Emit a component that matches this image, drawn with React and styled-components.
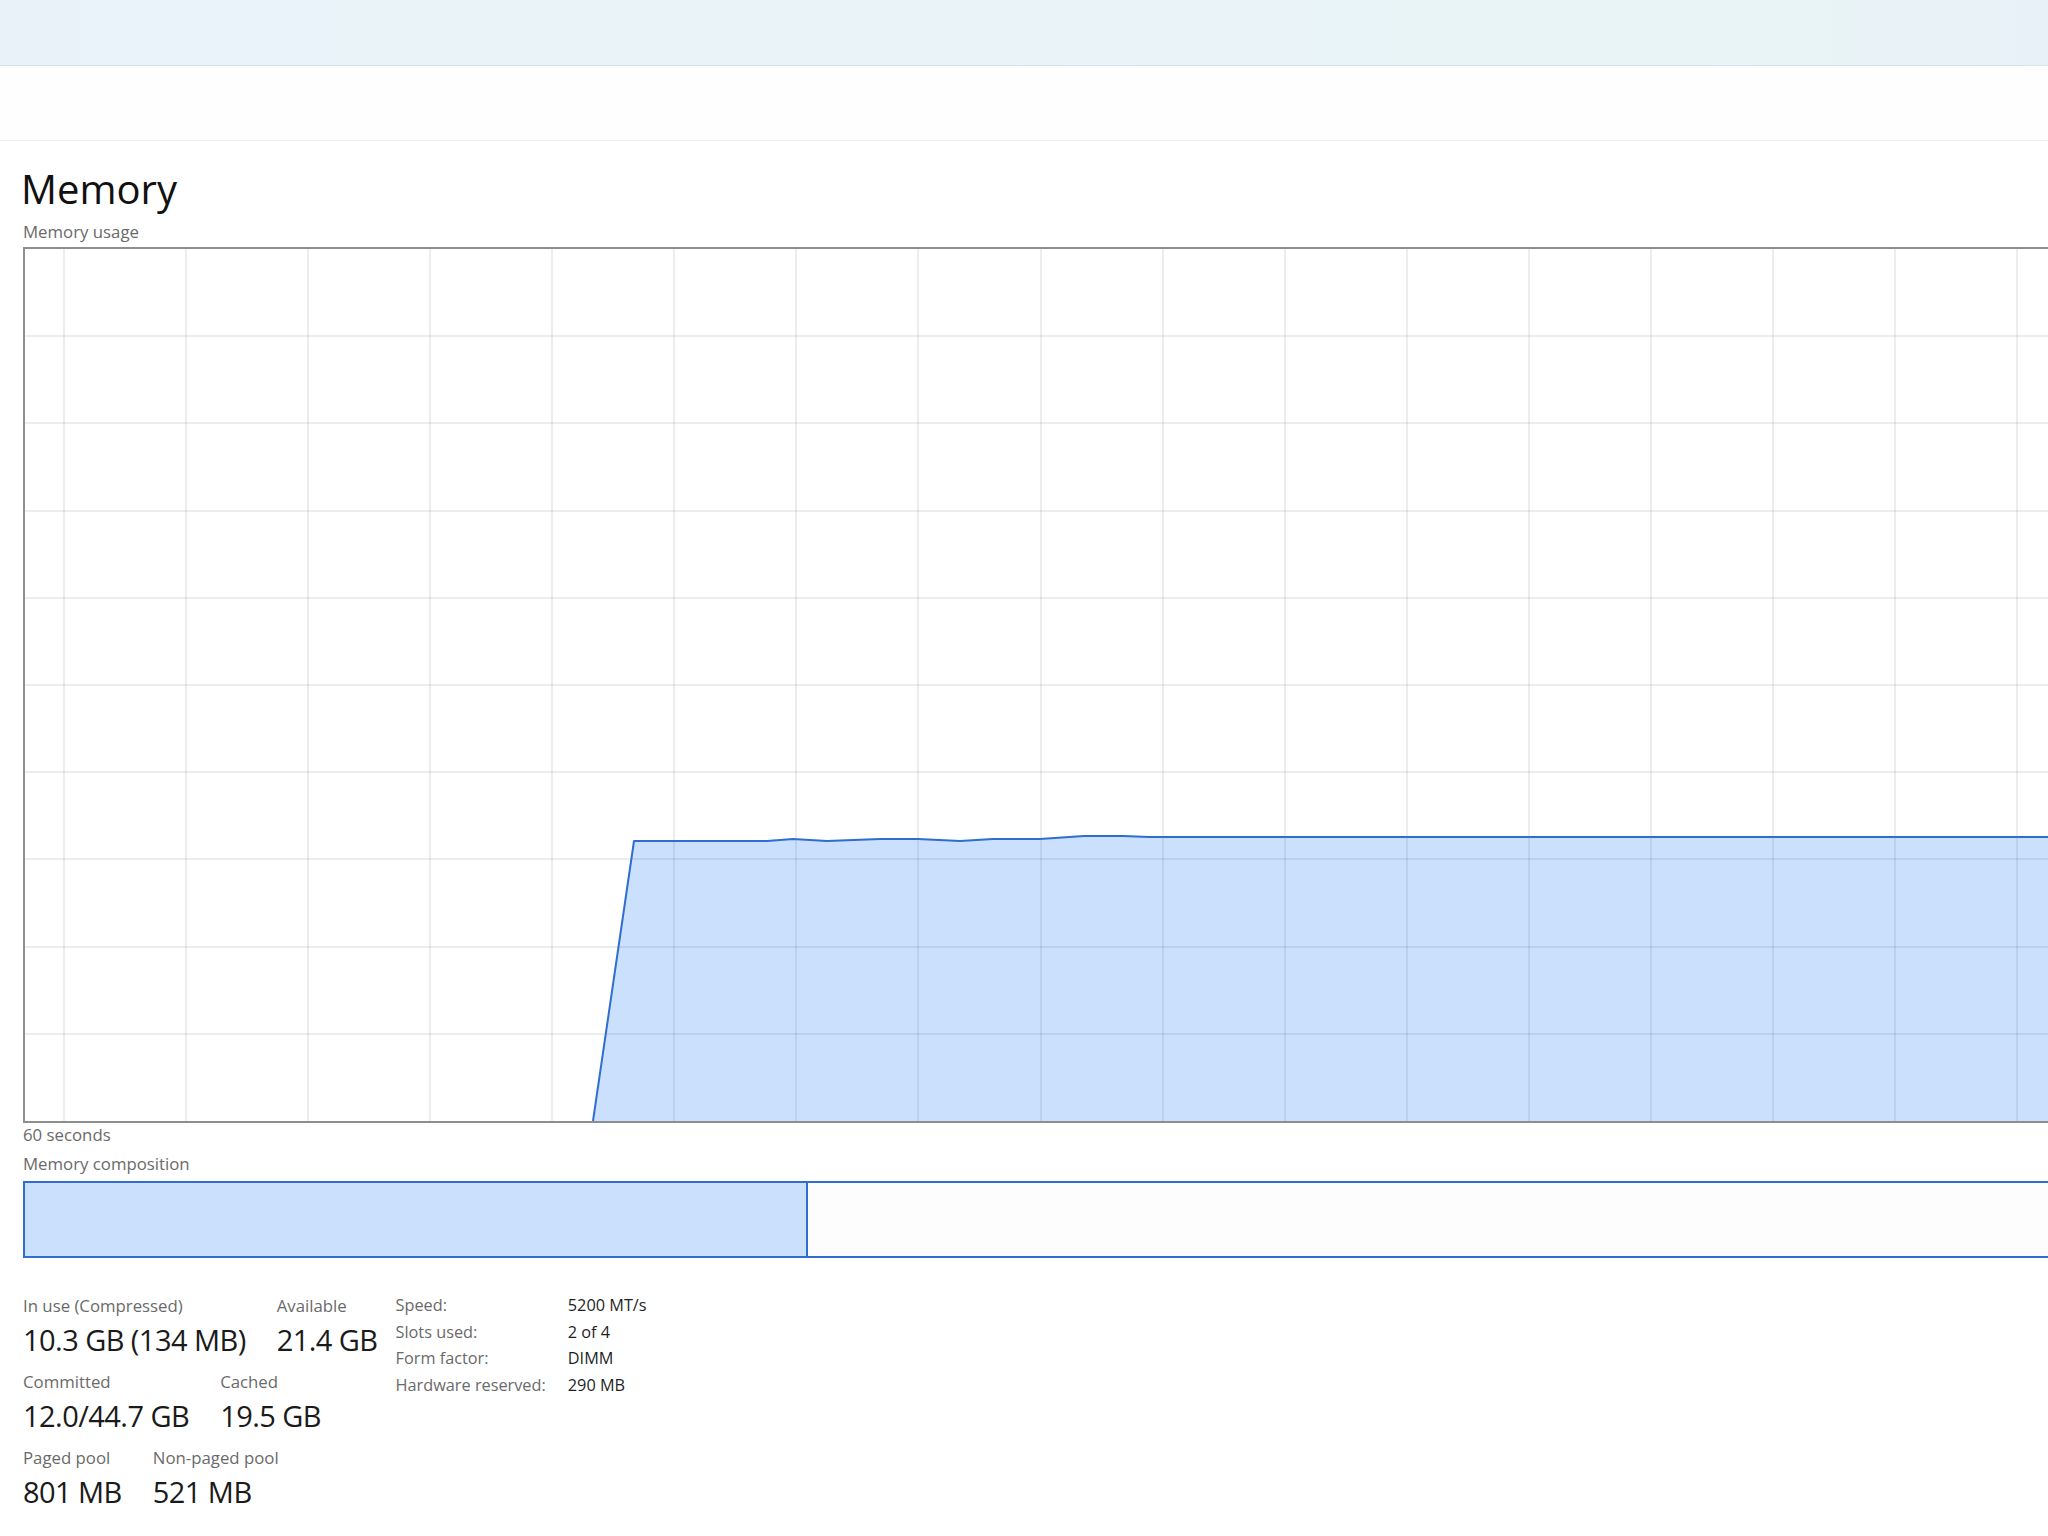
import React from "react";
import styled, { createGlobalStyle } from "styled-components";

const GlobalStyle = createGlobalStyle`
  html, body {
    margin: 0;
    padding: 0;
    background: #ffffff;
    overflow: hidden;
  }
  body {
    font-family: "Open Sans", "Noto Sans", "Liberation Sans", sans-serif;
    color: #1b1b1b;
  }
`;

const Window = styled.div`
  width: 2048px;
  height: 1536px;
  overflow: hidden;
  display: flex;
  flex-direction: column;
  background: #ffffff;
`;

const TitleBar = styled.div`
  flex: none;
  height: 65px;
  background: linear-gradient(90deg, #e8f2f8 0%, #e9f3f8 55%, #e8f4f5 85%, #e9f1f8 100%);
  border-bottom: 1px solid #dae3e9;
`;

const Toolbar = styled.div`
  flex: none;
  height: 74px;
  background: #fefefe;
  border-bottom: 1px solid #e8eef2;
`;

const Content = styled.div`
  flex: none;
  width: 2441px;
  padding: 23px 0 0 23px;
  display: flex;
  flex-direction: column;
`;

const Heading = styled.h1`
  margin: 0 0 0 -2px;
  font-size: 40px;
  line-height: 50px;
  font-weight: 400;
  color: #111111;
`;

const Caption = styled.div`
  font-size: 16.8px;
  line-height: 20px;
  color: #6a6a6a;
  margin-top: ${(p) => p.$top || 0}px;
`;

const ChartFrame = styled.div`
  margin-top: 5px;
  height: 872px;
  border: 2px solid #8e8e8e;
  background: #ffffff;
  overflow: hidden;
`;

const ChartSvg = styled.svg`
  display: block;
`;

const CompositionBar = styled.div`
  margin-top: 7px;
  height: 73px;
  border: 2px solid #2f6dd0;
  display: flex;
  background: #fdfdfd;
`;

const Segment = styled.div`
  flex: none;
  height: 100%;
  background: ${(p) => p.$fill};
  border-right: 2px solid #2f6dd0;
  box-sizing: border-box;
`;

const StatsArea = styled.div`
  margin-top: 38px;
  display: flex;
  align-items: flex-start;
  gap: 18px;
`;

const StatColumn = styled.div`
  display: flex;
  flex-direction: column;
  gap: 14px;
`;

const StatRow = styled.div`
  display: flex;
  gap: 31px;
`;

const Stat = styled.div`
  display: flex;
  flex-direction: column;
  gap: 6px;
`;

const StatLabel = styled.div`
  font-size: 16.8px;
  line-height: 20px;
  color: #6a6a6a;
  white-space: nowrap;
`;

const StatValue = styled.div`
  font-size: 29px;
  line-height: 36px;
  letter-spacing: -0.55px;
  color: #1a1a1a;
  white-space: nowrap;
`;

const SpecTable = styled.div`
  margin-top: -4px;
  display: grid;
  grid-template-columns: auto auto;
  column-gap: 22px;
  font-size: 16.3px;
  line-height: 26.7px;
`;

const SpecLabel = styled.div`
  color: #6a6a6a;
  white-space: nowrap;
`;

const SpecValue = styled.div`
  color: #1f1f1f;
  white-space: nowrap;
`;

const CHART_W = 2437;
const CHART_H = 872;
const COLS = 20;
const COL_W = 122.07;
const COL_OFFSET = 39;
const ROWS = 10;

// Memory samples: idle before the trace starts, then a plateau with small ripples
const trace = [
  [568, 872],
  [609, 592],
  [742, 592],
  [768, 590],
  [802, 592],
  [855, 590],
  [893, 590],
  [935, 592],
  [968, 590],
  [1015, 590],
  [1059, 587],
  [1098, 587],
  [1124, 588],
  [CHART_W, 588],
];

function UsageChart() {
  const line = trace.map(([x, y], i) => `${i ? "L" : "M"}${x} ${y}`).join(" ");
  const area = `${line} L${CHART_W} ${CHART_H} Z`;
  const vLines = Array.from({ length: COLS }, (_, k) => COL_OFFSET + k * COL_W);
  const hLines = Array.from({ length: ROWS - 1 }, (_, j) => ((j + 1) * CHART_H) / ROWS);
  return (
    <ChartSvg width={CHART_W} height={CHART_H} viewBox={`0 0 ${CHART_W} ${CHART_H}`}>
      <path d={area} fill="#cbe0fc" />
      <g stroke="rgba(0,0,0,0.07)" strokeWidth="2" shapeRendering="crispEdges">
        {vLines.map((x) => (
          <line key={`v${x}`} x1={x} y1={0} x2={x} y2={CHART_H} />
        ))}
        {hLines.map((y) => (
          <line key={`h${y}`} x1={0} y1={y} x2={CHART_W} y2={y} />
        ))}
      </g>
      <path d={line} fill="none" stroke="#2f6dd0" strokeWidth="2" strokeLinejoin="round" />
    </ChartSvg>
  );
}

const composition = [
  { name: "In use", share: 0.3215, fill: "#cbe0fc" },
];

const stats = [
  [
    { label: "In use (Compressed)", value: "10.3 GB (134 MB)" },
    { label: "Available", value: "21.4 GB" },
  ],
  [
    { label: "Committed", value: "12.0/44.7 GB" },
    { label: "Cached", value: "19.5 GB" },
  ],
  [
    { label: "Paged pool", value: "801 MB" },
    { label: "Non-paged pool", value: "521 MB" },
  ],
];

const specs = [
  ["Speed:", "5200 MT/s"],
  ["Slots used:", "2 of 4"],
  ["Form factor:", "DIMM"],
  ["Hardware reserved:", "290 MB"],
];

export default function App() {
  return (
    <>
      <GlobalStyle />
      <Window>
        <TitleBar />
        <Toolbar />
        <Content>
          <Heading>Memory</Heading>
          <Caption $top={8}>Memory usage</Caption>
          <ChartFrame>
            <UsageChart />
          </ChartFrame>
          <Caption $top={2}>60 seconds</Caption>
          <Caption $top={9}>Memory composition</Caption>
          <CompositionBar>
            {composition.map((s) => (
              <Segment key={s.name} $fill={s.fill} style={{ width: `${s.share * 100}%` }} />
            ))}
          </CompositionBar>
          <StatsArea>
            <StatColumn>
              {stats.map((row, i) => (
                <StatRow key={i}>
                  {row.map((s) => (
                    <Stat key={s.label}>
                      <StatLabel>{s.label}</StatLabel>
                      <StatValue>{s.value}</StatValue>
                    </Stat>
                  ))}
                </StatRow>
              ))}
            </StatColumn>
            <SpecTable>
              {specs.map(([k, v]) => (
                <React.Fragment key={k}>
                  <SpecLabel>{k}</SpecLabel>
                  <SpecValue>{v}</SpecValue>
                </React.Fragment>
              ))}
            </SpecTable>
          </StatsArea>
        </Content>
      </Window>
    </>
  );
}
